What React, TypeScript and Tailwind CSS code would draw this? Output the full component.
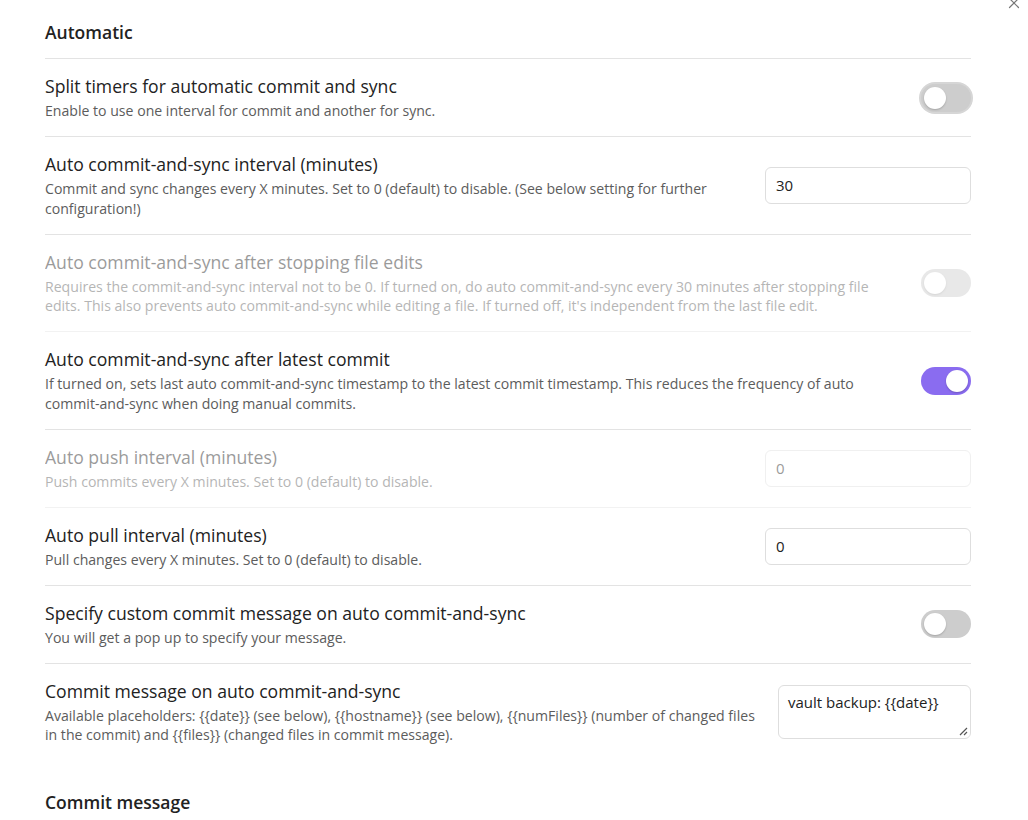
import { X } from "lucide-react";

type TRow = {
  title: string;
  desc: string;
  disabled?: boolean;
  control: "toggle" | "input" | "textarea";
  on?: boolean;
  value?: string;
  hover?: boolean;
};

const rows: TRow[] = [
  {
    title: "Split timers for automatic commit and sync",
    desc: "Enable to use one interval for commit and another for sync.",
    control: "toggle",
    hover: true,
  },
  {
    title: "Auto commit-and-sync interval (minutes)",
    desc: "Commit and sync changes every X minutes. Set to 0 (default) to disable. (See below setting for further configuration!)",
    control: "input",
    value: "30",
  },
  {
    title: "Auto commit-and-sync after stopping file edits",
    desc: "Requires the commit-and-sync interval not to be 0. If turned on, do auto commit-and-sync every 30 minutes after stopping file edits. This also prevents auto commit-and-sync while editing a file. If turned off, it's independent from the last file edit.",
    control: "toggle",
    disabled: true,
  },
  {
    title: "Auto commit-and-sync after latest commit",
    desc: "If turned on, sets last auto commit-and-sync timestamp to the latest commit timestamp. This reduces the frequency of auto commit-and-sync when doing manual commits.",
    control: "toggle",
    on: true,
  },
  {
    title: "Auto push interval (minutes)",
    desc: "Push commits every X minutes. Set to 0 (default) to disable.",
    control: "input",
    value: "0",
    disabled: true,
  },
  {
    title: "Auto pull interval (minutes)",
    desc: "Pull changes every X minutes. Set to 0 (default) to disable.",
    control: "input",
    value: "0",
  },
  {
    title: "Specify custom commit message on auto commit-and-sync",
    desc: "You will get a pop up to specify your message.",
    control: "toggle",
  },
  {
    title: "Commit message on auto commit-and-sync",
    desc: "Available placeholders: {{date}} (see below), {{hostname}} (see below), {{numFiles}} (number of changed files in the commit) and {{files}} (changed files in commit message).",
    control: "textarea",
    value: "vault backup: {{date}}",
  },
];

const Toggle = ({ on, hover }: { on?: boolean; hover?: boolean }) => (
  <div
    className={`flex h-[28px] w-[50px] items-center rounded-full p-[3px] ${
      on ? "justify-end bg-[#8a6cf0]" : "justify-start bg-[#cdcdcd]"
    } ${hover ? "shadow-[0_0_0_2px_#d6d6d6]" : ""}`}
  >
    <div className="h-[22px] w-[22px] rounded-full bg-white shadow-[0_1px_2px_rgba(0,0,0,0.2)]" />
  </div>
);

const Control = ({ row }: { row: TRow }) => {
  if (row.control === "toggle") return <Toggle on={row.on} hover={row.hover} />;
  if (row.control === "input")
    return (
      <div className="flex h-[37px] w-[206px] items-center rounded-md border border-[#dedede] bg-white px-[10px] text-[15px] text-[#222]">
        {row.value}
      </div>
    );
  return (
    <div className="relative h-[54px] w-[193px] rounded-md border border-[#dedede] bg-white px-[9px] pt-[5px] text-[15px] text-[#222]">
      {row.value}
      <svg className="absolute bottom-[2px] right-[2px]" width="10" height="10" viewBox="0 0 10 10">
        <path d="M9 2 L2 9 M9 6 L6 9" stroke="#555" strokeWidth="1.2" />
      </svg>
    </div>
  );
};

const SettingRow = ({ row, last }: { row: TRow; last: boolean }) => (
  <div
    className={`flex items-center pt-4 pb-[15.5px] ${last ? "" : "border-b border-[#e3e3e3]"} ${
      row.disabled ? "opacity-45" : ""
    }`}
  >
    <div className="mr-4 flex flex-1 flex-col gap-[4px]">
      <div className="text-[17.6px] leading-[22px] text-[#222]">{row.title}</div>
      <div className="text-[14.1px] leading-[19.5px] text-[#5c5c5c]">{row.desc}</div>
    </div>
    <div className="flex shrink-0 justify-end">
      <Control row={row} />
    </div>
  </div>
);

export default function App() {
  return (
    <div
      className="relative min-h-[820px] overflow-hidden bg-white pl-[45px] pr-[57px]"
      style={{ fontFamily: '"Open Sans", "Noto Sans", sans-serif' }}
    >
      <X className="absolute right-[5px] top-[-6px] text-[#777]" size={18} strokeWidth={1.6} />
      <div className="border-b border-[#e3e3e3] pt-[20px] pb-[14px] text-[17.5px] font-semibold leading-[24px] text-[#222]">
        Automatic
      </div>
      {rows.map((row, i) => (
        <SettingRow key={row.title} row={row} last={i === rows.length - 1} />
      ))}
      <div className="pt-[30px] text-[17.5px] font-semibold leading-[24px] text-[#222]">Commit message</div>
    </div>
  );
}
